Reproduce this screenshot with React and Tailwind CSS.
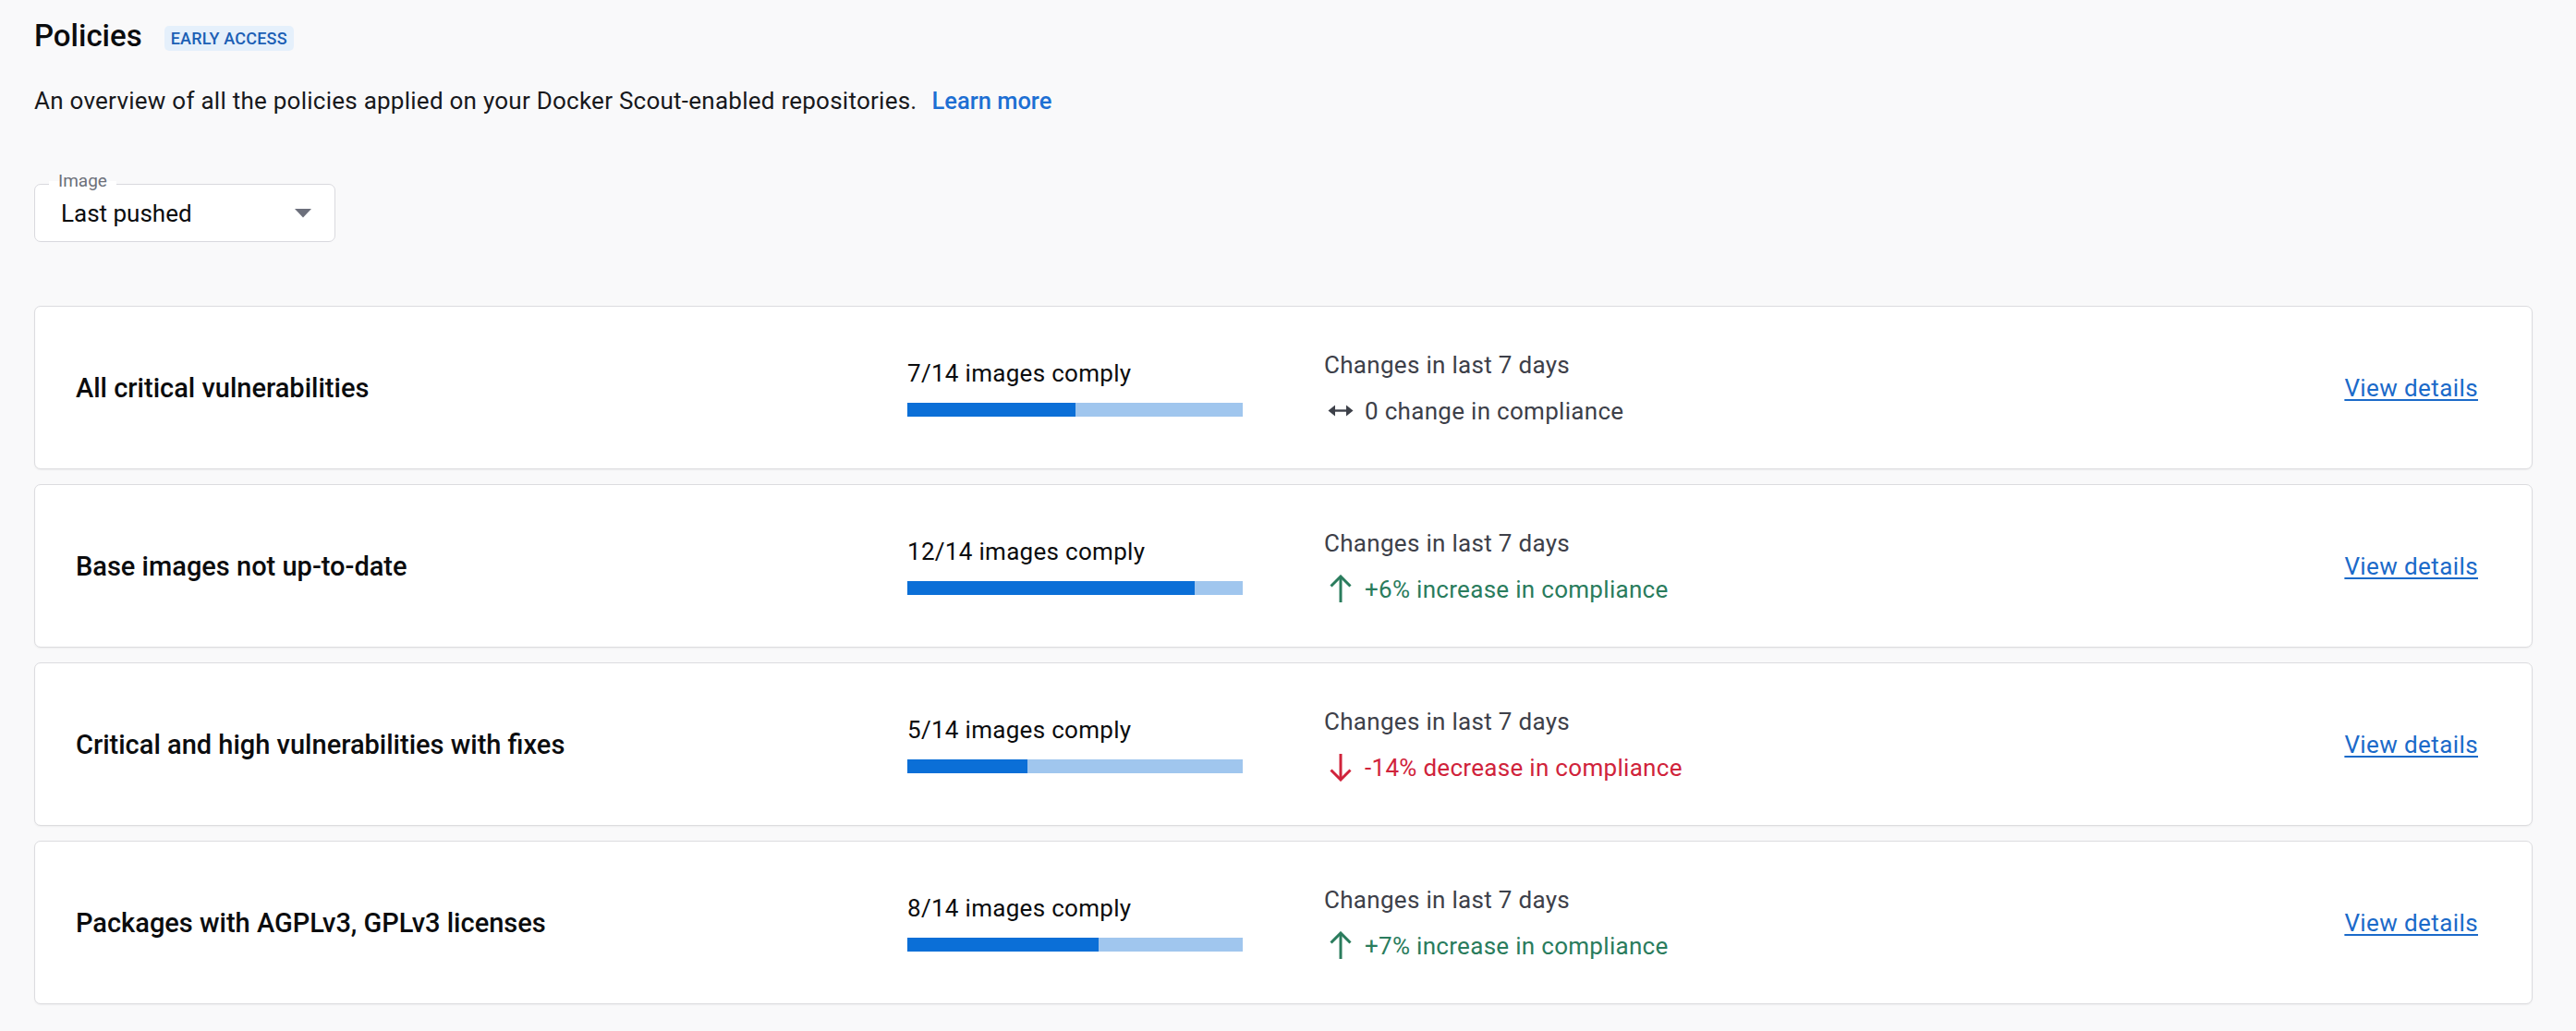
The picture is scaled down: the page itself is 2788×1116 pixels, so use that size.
import React from "react";

const policies = [
  { name: "All critical vulnerabilities", ok: 7, total: 14, kind: "same", text: "0 change in compliance" },
  { name: "Base images not up-to-date", ok: 12, total: 14, kind: "up", text: "+6% increase in compliance" },
  { name: "Critical and high vulnerabilities with fixes", ok: 5, total: 14, kind: "down", text: "-14% decrease in compliance" },
  { name: "Packages with AGPLv3, GPLv3 licenses", ok: 8, total: 14, kind: "up", text: "+7% increase in compliance" },
];

function ArrowUp() {
  return (
    <svg width="24" height="31" viewBox="0 0 24 31" fill="none" stroke="#2a7c5d" strokeWidth="3" strokeLinecap="butt" strokeLinejoin="miter">
      <path d="M12 30V2.5" />
      <path d="M1.5 12.5L12 2L22.5 12.5" />
    </svg>
  );
}

function ArrowDown() {
  return (
    <svg width="24" height="31" viewBox="0 0 24 31" fill="none" stroke="#d0233b" strokeWidth="3" strokeLinecap="butt" strokeLinejoin="miter">
      <path d="M12 1V28.5" />
      <path d="M1.5 18.5L12 29L22.5 18.5" />
    </svg>
  );
}

function ArrowBoth() {
  return (
    <svg width="28" height="13" viewBox="0 0 28 13">
      <path d="M6 6.5H22" stroke="#3d4049" strokeWidth="2.4" />
      <path d="M0.5 6.5L8 0.5V12.5Z" fill="#3d4049" />
      <path d="M27.5 6.5L20 0.5V12.5Z" fill="#3d4049" />
    </svg>
  );
}

function Change({ kind, text }) {
  const color = kind === "up" ? "text-[#2a7c5d]" : kind === "down" ? "text-[#d0233b]" : "text-[#3d4049]";
  return (
    <div className="mt-[20px] flex h-[30px] items-center">
      <div className="flex w-[36px] items-center justify-center">
        {kind === "up" ? <ArrowUp /> : kind === "down" ? <ArrowDown /> : <ArrowBoth />}
      </div>
      <span className={`ml-[8px] text-[26px] leading-[30px] tracking-[0.3px] ${color}`}>{text}</span>
    </div>
  );
}

function PolicyCard({ p }) {
  return (
    <div className="flex h-[177px] items-center rounded-[7px] border border-[#dcdcdf] bg-white pl-[44px] pr-[58px] shadow-[0_1px_2px_rgba(0,0,0,0.05)]">
      <div className="w-[900px] shrink-0 text-[29px] font-medium leading-[34px] text-[#0b0c0e]">{p.name}</div>
      <div className="w-[451px] shrink-0">
        <div className="text-[26px] leading-[30px] tracking-[0.3px] text-[#0b0c0e]">
          {p.ok}/{p.total} images comply
        </div>
        <div className="mt-[17px] flex h-[15px] w-[363px] bg-[#a0c6ee]">
          <div className="h-full bg-[#0b6fd7]" style={{ width: `${(p.ok / p.total) * 100}%` }} />
        </div>
      </div>
      <div className="flex-1">
        <div className="text-[26px] leading-[30px] tracking-[0.3px] text-[#3d4049]">Changes in last 7 days</div>
        <Change kind={p.kind} text={p.text} />
      </div>
      <a href="#" className="text-[26px] leading-[30px] tracking-[0.4px] text-[#1b6ac9] underline decoration-[1.5px] underline-offset-[3px]">
        View details
      </a>
    </div>
  );
}

export default function App() {
  return (
    <div className="min-h-screen bg-[#f9f9fa] pl-[37px] pr-[47px] pt-[19px] font-['Roboto',sans-serif]">
      <div className="flex h-[40px] items-center">
        <h1 className="text-[33px] font-medium leading-[40px] text-[#0b0c0e]">Policies</h1>
        <span className="ml-[24px] mt-[4px] flex h-[27px] items-center rounded-[5px] bg-[#e5f0fb] px-[7px] text-[18px] font-medium tracking-[0.2px] text-[#1b5fb5]">
          EARLY ACCESS
        </span>
      </div>
      <p className="mt-[34px] text-[26px] leading-[32px] tracking-[0.25px] text-[#17181c]">
        An overview of all the policies applied on your Docker Scout-enabled repositories.
        <a href="#" className="ml-[16px] text-[25.5px] font-medium tracking-normal text-[#1d6fd3]">Learn more</a>
      </p>
      <div className="relative mt-[74px] flex h-[63px] w-[326px] items-center rounded-[7px] border border-[#d9d9de] bg-white pl-[28px] pr-[25px]">
        <span className="absolute left-[15px] top-[-14px] bg-[linear-gradient(#f9f9fa_50%,#ffffff_50%)] px-[10px] text-[19px] leading-[20px] text-[#6c7079]">
          Image
        </span>
        <span className="flex-1 text-[26px] leading-[30px] text-[#0b0c0e]">Last pushed</span>
        <svg width="18" height="10" viewBox="0 0 18 10">
          <path d="M0 0H18L9 9.5Z" fill="#6c6f7b" />
        </svg>
      </div>
      <div className="mt-[69px] flex flex-col gap-[16px] pb-[28px]">
        {policies.map((p) => (
          <PolicyCard key={p.name} p={p} />
        ))}
      </div>
    </div>
  );
}
